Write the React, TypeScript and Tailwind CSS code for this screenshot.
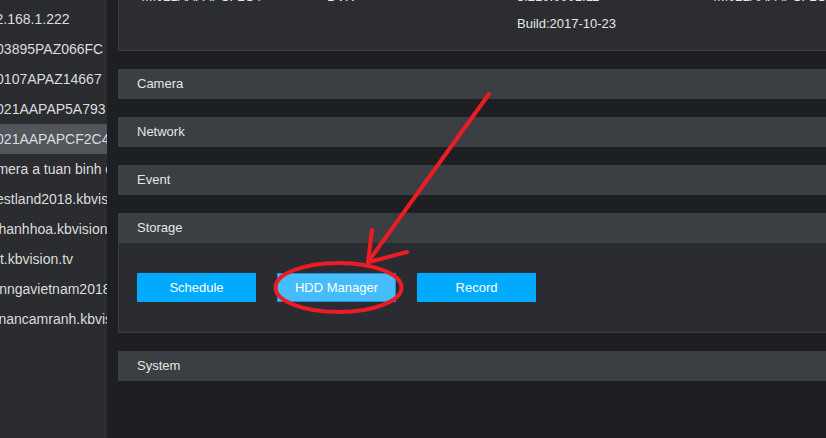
import React from "react";

const devices: [string, number][] = [
  ["192.168.1.222", 20],
  ["4003895PAZ066FC", 19.5],
  ["400107APAZ14667", 19.5],
  ["40021AAPAP5A793", 19.5],
  ["40021AAPAPCF2C4", 19.5],
  ["Camera a tuan binh dinh", 21.5],
  ["dbestland2018.kbvision.tv", 19.5],
  ["khanhhoa.kbvision.tv", 8.5],
  ["bmt.kbvision.tv", 19.5],
  ["hktnngavietnam2018.kbvision.tv", 19.5],
  ["thunancamranh.kbvision.tv", 21],
];

const sections = ["Camera", "Network", "Event"];

const SectionBar: React.FC<{ title: string }> = ({ title }) => (
  <div className="h-[30px] bg-[#3b3e43] flex items-center pl-[19px] text-[13px] text-[#e6e6e6]">
    {title}
  </div>
);

const App: React.FC = () => {
  return (
    <div
      className="relative w-[826px] h-[438px] overflow-hidden bg-[#1e1f23] flex"
      style={{ fontFamily: '"Liberation Sans", Arial, sans-serif' }}
    >
      {/* device list, scrolled sideways */}
      <div className="w-[107px] h-full bg-[#2a2c30] overflow-hidden pt-[4px] shrink-0">
        {devices.map(([name, shift], idx) => (
          <div
            key={idx}
            className={
              "h-[30px] flex items-center whitespace-nowrap text-[14px] text-[#dcdcdc] " +
              (idx === 4 ? "bg-[#51555c]" : "")
            }
          >
            <span style={{ marginLeft: -shift }}>{name}</span>
          </div>
        ))}
      </div>

      <div className="flex-1 overflow-hidden pl-[11px]">
        <div className="w-[780px] flex flex-col">
          {/* device info panel, top part scrolled away */}
          <div className="-mt-[18px] h-[69px] bg-[#2b2d31] border border-[#3a3c40] text-[13px] text-[#e6e6e6]">
            <div className="grid grid-cols-[189px_190px_193px_1fr] grid-rows-[27px_28px] pl-[19px]">
              <div className="flex items-center">4M021AAPAPCF2C4</div>
              <div className="flex items-center">DVR</div>
              <div className="flex items-center">3.210.0001.11</div>
              <div className="flex items-center">4M021AAPAPCF2C4</div>
              <div />
              <div />
              <div className="flex items-center">Build:2017-10-23</div>
              <div />
            </div>
          </div>

          <div className="mt-[18px] flex flex-col gap-[18px]">
            {sections.map((s) => (
              <SectionBar key={s} title={s} />
            ))}
            <div>
              <SectionBar title="Storage" />
              <div className="h-[90px] bg-[#2a2c31] border border-t-0 border-[#3a3c40] flex items-center gap-[21px] pl-[18px]">
                <button className="w-[119px] h-[29px] bg-[#00aaff] text-white text-[13px]">
                  Schedule
                </button>
                <button className="w-[119px] h-[29px] bg-[#45bdfa] border border-[#1f8fe0] text-white text-[13px]">
                  HDD Manager
                </button>
                <button className="w-[119px] h-[29px] bg-[#00aaff] text-white text-[13px]">
                  Record
                </button>
              </div>
            </div>
            <SectionBar title="System" />
          </div>
        </div>
      </div>

      {/* red hand-drawn annotation */}
      <svg
        className="absolute inset-0 pointer-events-none"
        width="826"
        height="438"
        viewBox="0 0 826 438"
      >
        <g stroke="#ed1c24" strokeWidth="4" fill="none" strokeLinecap="round">
          <line x1="489" y1="94" x2="368" y2="262" />
          <line x1="372" y1="230" x2="368" y2="262" />
          <line x1="407" y1="252" x2="369" y2="262" />
          <ellipse cx="338.5" cy="287.5" rx="63" ry="24.5" />
        </g>
      </svg>
    </div>
  );
};

export default App;
